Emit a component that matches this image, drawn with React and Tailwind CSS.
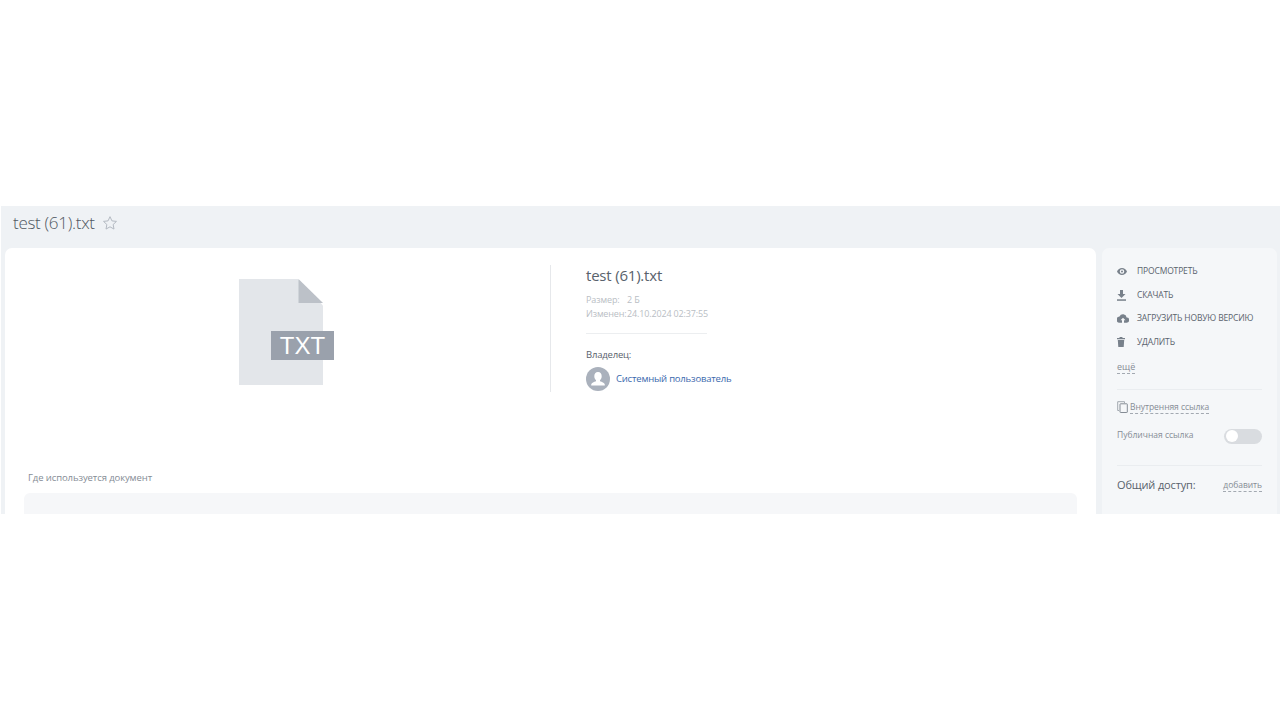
import React from "react";

const Eye = () => (
  <svg width="10" height="7" viewBox="0 0 20 14"><path fillRule="evenodd" fill="#78818b" d="M10 0C5.500 0 2 2.800 0 7c2 4.200 5.500 7 10 7s8-2.800 10-7c-2-4.200-5.500-7-10-7zm0 11.500a4.500 4.500 0 1 1 0-9 4.500 4.500 0 0 1 0 9zM10 5a2 2 0 1 0 0 4 2 2 0 0 0 0-4z" /></svg>
);
const Down = () => (
  <svg width="9" height="11" viewBox="0 0 9 11"><path fill="#78818b" d="M3 0h3v4h2.500L4.500 8 .5 4H3z" /><rect x="0" y="9.300" width="9" height="1.500" fill="#78818b" /></svg>
);
const Cloud = () => (
  <svg width="12" height="9" viewBox="0 0 24 17"><path fill="#78818b" d="M19.300 6.500A7.500 7.500 0 0 0 5 4.500 6 6 0 0 0 6 17h4v-5H7l5-5 5 5h-3v5h5a5.200 5.200 0 0 0 .3-10.500z" /></svg>
);
const Trash = () => (
  <svg width="8" height="10" viewBox="0 0 8 10"><path fill="#78818b" d="M0 1h2.300l.5-1h2.400l.5 1H8v1.200H0zM.8 3h6.400l-.5 7H1.300z" /></svg>
);
const Copy = () => (
  <svg width="11" height="12" viewBox="0 0 11 12" fill="none" stroke="#a3a9b1" strokeWidth="1"><path d="M2 9.500H.7V.7h6.800V2" /><rect x="3" y="2.800" width="7.300" height="8.700" rx=".5" stroke="#858c95" /></svg>
);
const Person = () => (
  <svg width="24" height="24" viewBox="0 0 24 24"><circle cx="12" cy="12" r="12" fill="#aab1bc" /><path fill="#fff" d="M12 5c-2.500 0-3.700 1.900-3.700 4.200 0 1.700.7 3.100 1.700 3.900v1.100c-2 .7-4.300 1.500-4.800 3.300v1h13.600v-1c-.5-1.800-2.800-2.600-4.800-3.300v-1.100c1-.8 1.700-2.200 1.700-3.900C15.700 6.900 14.500 5 12 5z" /></svg>
);

function Action({ icon, label }) {
  return (
    <div className="flex items-center h-[23.500px]">
      <span className="w-[20px] shrink-0 flex justify-start items-center">{icon}</span>
      <span className="text-[8.500px] tracking-[-0.15px] text-[#5a636d] whitespace-nowrap">{label}</span>
    </div>
  );
}

export default function App() {
  return (
    <div className="h-[720px] w-[1280px] bg-white pt-[206px] overflow-hidden font-['Open_Sans','Noto_Sans',sans-serif]">
      <div className="h-[308px] ml-px bg-[#eff2f5] overflow-hidden flex flex-col">
        <div className="h-[42px] shrink-0 flex items-center pl-[12px] pb-[12px] pt-[4px]">
          <span className="text-[17px] leading-[24px] font-light tracking-[-0.3px] text-[#4f5862]">test (61).txt</span>
          <svg className="ml-[7px]" width="16" height="16" viewBox="0 0 24 24" fill="none" stroke="#b4bac2" strokeWidth="1.500" strokeLinejoin="round"><path d="M12 2.500l2.900 6.300 6.800.8-5 4.700 1.300 6.800-6-3.400-6 3.400 1.300-6.800-5-4.700 6.800-.8z" /></svg>
        </div>
        <div className="flex-1 flex pl-[4px] pr-[3px] gap-[6px] min-h-0">
          <div className="w-[1091px] bg-white rounded-t-[7px] flex flex-col shrink-0">
            <div className="flex h-[144px] mt-[17px] shrink-0">
              <div className="w-[546px] border-r border-[#e6e8eb] h-[127px] flex justify-start pl-[234px] pt-[14px]">
                <div className="relative w-[84px] h-[106px] bg-[#e3e6ea] [clip-path:polygon(0_0,70%_0,100%_25%,100%_100%,0_100%)]">
                </div>
                <div className="relative w-0 h-0">
                  <div className="absolute left-[-84px] top-0 w-[84px] h-[24px]">
                    <svg width="84" height="24" viewBox="0 0 84 24"><path fill="#bcc1c8" d="M59.500 0L84 24H59.500z" /></svg>
                  </div>
                  <div className="absolute left-[-52px] top-[52px] w-[63px] h-[29px] bg-[#9aa1ac] text-white text-[24px] leading-[29px] text-center font-['Liberation_Sans',sans-serif]">TXT</div>
                </div>
              </div>
              <div className="pl-[35px] flex flex-col">
                <div className="text-[15px] leading-[20px] tracking-[-0.2px] text-[#59626c]">test (61).txt</div>
                <div className="mt-[8px] flex text-[9px] leading-[13px] tracking-[-0.1px] text-[#b9bec4]"><span className="w-[41px]">Размер:</span><span>2 Б</span></div>
                <div className="mt-px flex text-[9px] leading-[13px] tracking-[-0.15px] text-[#b9bec4] whitespace-nowrap"><span className="w-[41px]">Изменен:</span><span>24.10.2024 02:37:55</span></div>
                <div className="mt-[13px] w-[121px] border-t border-[#eceef0]" />
                <div className="mt-[14px] text-[9.500px] leading-[14px] tracking-[-0.2px] text-[#59626c]">Владелец:</div>
                <div className="mt-[5px] flex items-center gap-[6px]">
                  <Person />
                  <span className="text-[9.500px] tracking-[-0.2px] text-[#3a68ad] whitespace-nowrap">Системный пользователь</span>
                </div>
              </div>
            </div>
            <div className="pl-[23px] mt-[62px] text-[9.500px] leading-[14px] tracking-[-0.1px] text-[#858c95]">Где используется документ</div>
            <div className="mt-[8px] ml-[19px] w-[1053px] flex-1 bg-[#f6f7f9] rounded-t-[6px]" />
          </div>
          <div className="w-[175px] bg-[#f5f7f9] rounded-t-[7px] pt-[12px] px-[15px] shrink-0">
            <Action icon={<Eye />} label="ПРОСМОТРЕТЬ" />
            <Action icon={<Down />} label="СКАЧАТЬ" />
            <Action icon={<Cloud />} label="ЗАГРУЗИТЬ НОВУЮ ВЕРСИЮ" />
            <Action icon={<Trash />} label="УДАЛИТЬ" />
            <div className="mt-[7px] flex"><span className="text-[9px] leading-[12px] text-[#858c95] border-b border-dashed border-[#a3a9b1]">ещё</span></div>
            <div className="mt-[15px] border-t border-[#eaedf0] w-[145px]" />
            <div className="mt-[10px] flex items-center gap-[2px]">
              <Copy />
              <span className="text-[8.500px] tracking-[-0.05px] leading-[13px] text-[#858c95] border-b border-dashed border-[#a3a9b1]">Внутренняя ссылка</span>
            </div>
            <div className="mt-[14px] flex items-center justify-between w-[145px] h-[16px]">
              <span className="text-[8.500px] tracking-[0px] text-[#858c95] pb-[2px]">Публичная ссылка</span>
              <div className="w-[38px] h-[15px] rounded-full bg-[#d9dce0] flex items-center pl-[2px]"><div className="w-[12px] h-[12px] rounded-full bg-white" /></div>
            </div>
            <div className="mt-[21px] border-t border-[#eaedf0] w-[145px]" />
            <div className="mt-[11px] flex items-center justify-between w-[145px]">
              <span className="text-[11px] tracking-[-0.15px] text-[#59626c]">Общий доступ:</span>
              <span className="text-[8.500px] tracking-[-0.05px] leading-[13px] text-[#858c95] border-b border-dashed border-[#a3a9b1]">добавить</span>
            </div>
          </div>
        </div>
      </div>
    </div>
  );
}
